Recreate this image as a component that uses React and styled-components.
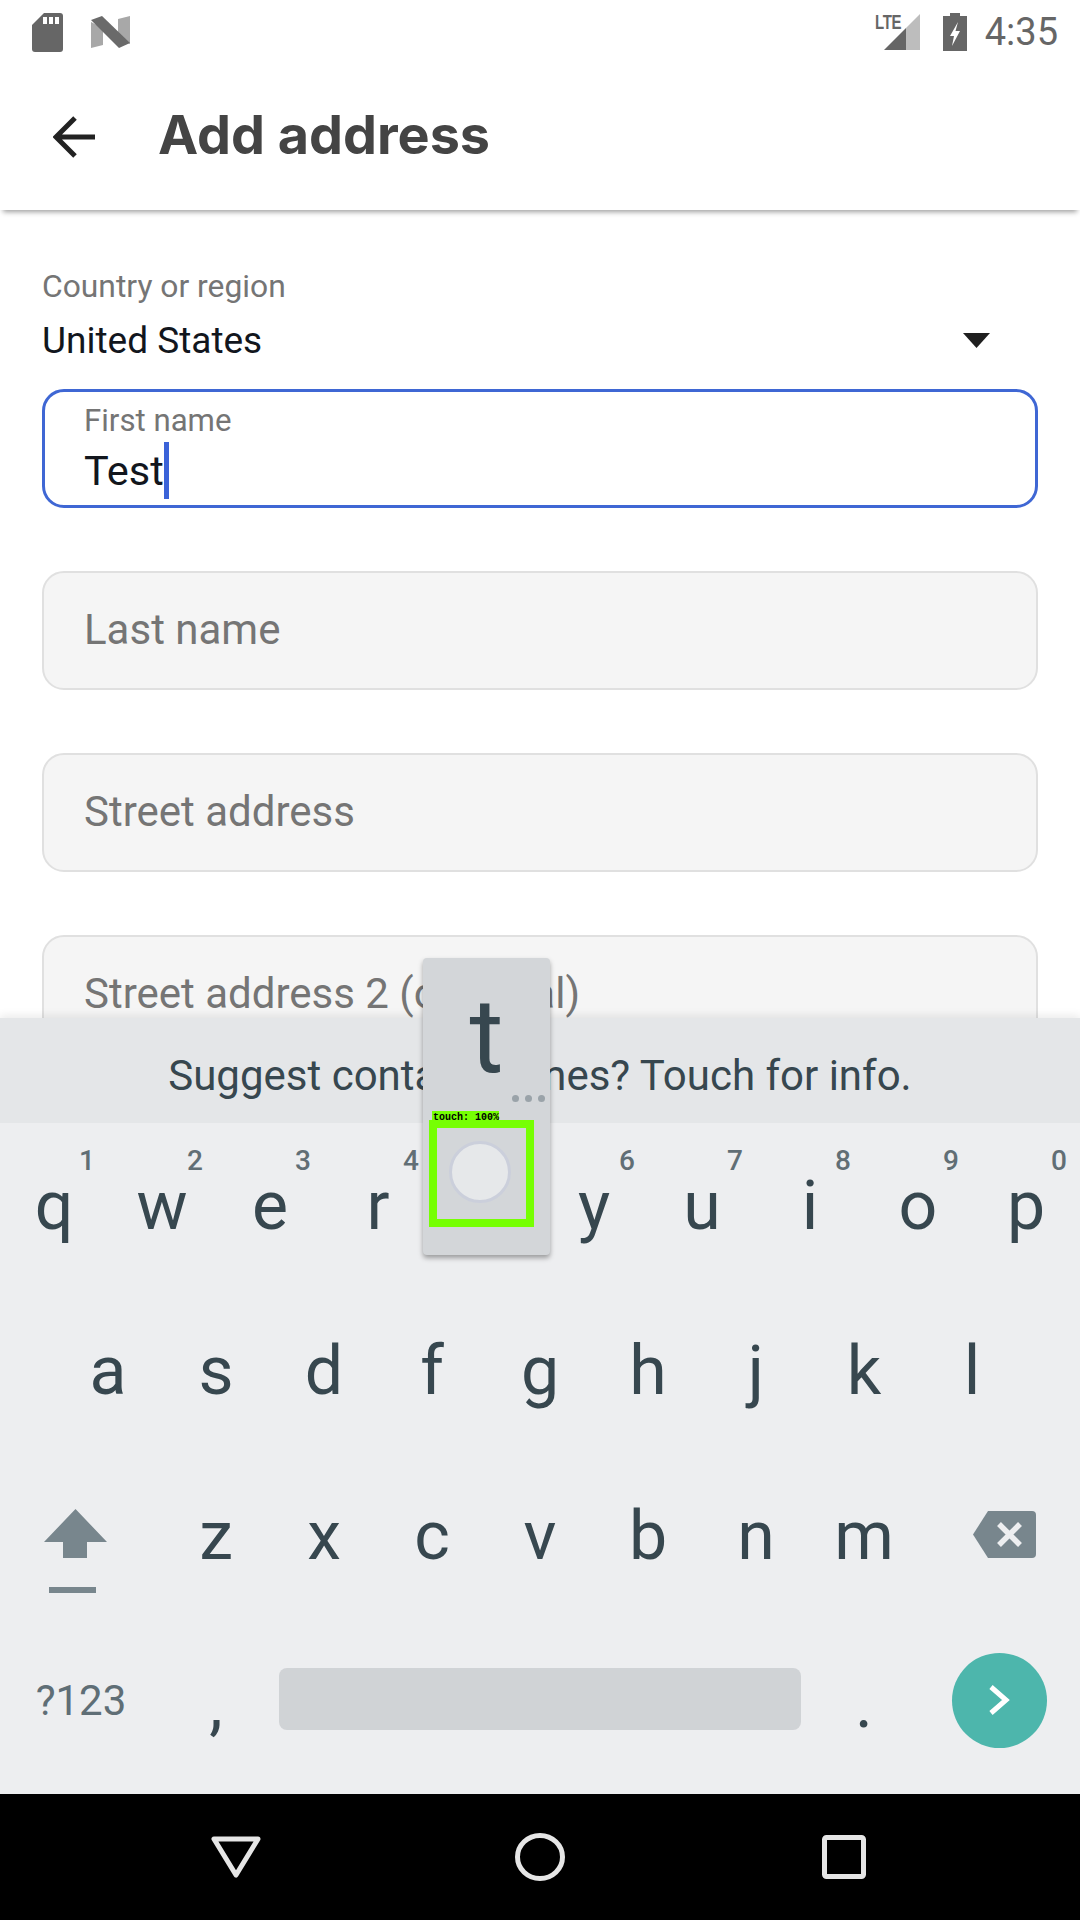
import React from "react";
import styled, { createGlobalStyle } from "styled-components";

const Global = createGlobalStyle`
  html, body { margin: 0; padding: 0; background: #fff; }
  * { box-sizing: border-box; }
  #root { width: 1080px; height: 1920px; }
`;

const Screen = styled.div`
  position: relative;
  width: 1080px;
  height: 1920px;
  display: flex;
  flex-direction: column;
  overflow: hidden;
  font-family: Roboto, "Noto Sans", sans-serif;
  background: #fff;
`;

const StatusBar = styled.div`
  height: 64px;
  flex: none;
  display: flex;
  align-items: center;
  justify-content: space-between;
  padding: 0 22px 0 32px;
  background: #fff;
`;
const StatusGroup = styled.div`
  display: flex;
  align-items: center;
  gap: ${(p) => p.$gap}px;
`;
const Clock = styled.span`
  font-size: 38px;
  color: #666;
  line-height: 1;
  margin-left: -3px;
`;
const LteBox = styled.div`
  position: relative;
  width: 45px;
  height: 38px;
  margin-right: 2px;
`;
const LteText = styled.span`
  position: absolute;
  left: 0;
  top: -1px;
  font: bold 20px/1 "Liberation Sans", sans-serif;
  color: #666;
  transform: scaleX(0.75);
  transform-origin: left center;
  letter-spacing: -0.5px;
`;

const Toolbar = styled.header`
  position: relative;
  z-index: 2;
  height: 146px;
  flex: none;
  display: flex;
  align-items: center;
  padding-left: 53px;
  background: #fff;
  box-shadow: 0 5px 5px -3px rgba(0, 0, 0, 0.38);
`;
const Title = styled.h1`
  margin: -4px 0 0 63px;
  font: 700 53.900px/1 Inter, "Liberation Sans", Arial, sans-serif;
  color: #444;
`;

const Form = styled.main`
  flex: 1;
  min-height: 0;
  overflow: hidden;
  padding: 58px 42px 0 42px;
  background: #fff;
`;
const CountryLabel = styled.div`
  font-size: 31.800px;
  line-height: 36px;
  color: #757575;
`;
const CountryRow = styled.div`
  display: flex;
  align-items: center;
  justify-content: space-between;
  height: 54px;
  margin: 9px 0 22px;
  padding-right: 48px;
  font-size: 37px;
  color: #12161d;
`;
const Fields = styled.div`
  display: flex;
  flex-direction: column;
  gap: 63px;
`;
const Field = styled.div`
  flex: none;
  height: 119px;
  border-radius: 22px;
  padding: ${(p) => (p.$active ? "0 39px" : "0 40px 3px")};
  display: flex;
  flex-direction: column;
  justify-content: center;
  border: ${(p) => (p.$active ? "3px solid #3f67d4" : "2px solid #e0e0e0")};
  background: ${(p) => (p.$active ? "#fff" : "#f5f5f5")};
`;
const FieldLabel = styled.div`
  font-size: 31.200px;
  line-height: 34px;
  color: #757575;
  margin-top: 5px;
`;
const FieldValue = styled.div`
  display: flex;
  align-items: center;
  height: 56px;
  margin-top: 4px;
  font-size: 41.500px;
  color: #12161d;
`;
const Caret = styled.span`
  width: 5px;
  height: 57px;
  background: #3b63d8;
`;
const Placeholder = styled.div`
  font-size: 42px;
  color: #757575;
`;

const Keyboard = styled.section`
  position: relative;
  z-index: 3;
  flex: none;
  height: 776px;
  background: #edeef0;
  box-shadow: 0 -3px 8px rgba(0, 0, 0, 0.08);
`;
const Suggest = styled.div`
  height: 105px;
  padding-top: 9px;
  display: flex;
  align-items: center;
  justify-content: center;
  background: #e4e6e8;
  font-size: 42px;
  color: #37474f;
`;
const Row = styled.div`
  height: ${(p) => p.$h || 165}px;
  display: grid;
  grid-template-columns: ${(p) => p.$cols};
  padding: 0 ${(p) => p.$pad || 0}px;
`;
const Key = styled.div`
  position: relative;
  display: flex;
  align-items: center;
  justify-content: center;
  font-size: 68px;
  line-height: 1;
  color: #37474f;
`;
const Hint = styled.span`
  position: absolute;
  top: 23px;
  right: 13px;
  font-size: 28px;
  line-height: 30px;
  font-weight: 500;
  color: #616e75;
`;
const ShiftKey = styled(Key)`
  padding: 32px 12px 0 0;
`;
const DeleteKey = styled(Key)`
  padding: 0 0 2px 11px;
`;
const ModeKey = styled(Key)`
  font-size: 42px;
  color: #5f6e76;
  padding-bottom: 5px;
`;
const SpaceBar = styled.div`
  align-self: start;
  margin: 50px 9px 0;
  height: 62px;
  border-radius: 8px;
  background: #d0d3d6;
`;
const EnterKey = styled(Key)`
  padding-bottom: 7px;
`;
const EnterCircle = styled.div`
  width: 95px;
  height: 95px;
  border-radius: 50%;
  display: flex;
  align-items: center;
  justify-content: center;
  background: #4db6ac;
`;

const Popup = styled.div`
  position: absolute;
  left: 423px;
  top: -60px;
  width: 127px;
  height: 297px;
  border-radius: 4px;
  background: #d3d6d9;
  box-shadow: 0 3px 5px rgba(0, 0, 0, 0.35);
`;
const PopupLetter = styled.div`
  position: absolute;
  left: 0;
  right: 0;
  top: 18px;
  text-align: center;
  font-size: 104px;
  line-height: 1.17;
  color: #37474f;
`;
const Dots = styled.div`
  position: absolute;
  left: 89px;
  top: 137px;
  display: flex;
  gap: 6px;
`;
const Dot = styled.span`
  width: 7px;
  height: 7px;
  border-radius: 50%;
  background: #9aa3a9;
`;
const TouchLabel = styled.div`
  position: absolute;
  z-index: 1;
  left: 9px;
  top: 153px;
  width: 67px;
  height: 10px;
  background: #76ff03;
  font: bold 10px/14px "Liberation Mono", monospace;
  color: #000;
  white-space: nowrap;
  padding-left: 1px;
`;
const TouchBox = styled.div`
  position: absolute;
  left: 6px;
  top: 162px;
  width: 105px;
  height: 107px;
  border: 8px solid #76ff03;
  display: flex;
  align-items: center;
  justify-content: center;
`;
const TouchCircle = styled.div`
  width: 62px;
  height: 62px;
  border-radius: 50%;
  margin: -4px 0 0 -3px;
  background: #e6e8ea;
  border: 3px solid #cbcfdb;
`;

const NavBar = styled.nav`
  position: relative;
  z-index: 3;
  flex: none;
  height: 126px;
  padding: 0 84px;
  background: #000;
  display: grid;
  grid-template-columns: repeat(3, 304px);
  align-items: center;
  justify-items: center;
`;

const row1 = ["q","w","e","r","t","y","u","i","o","p"];
const row2 = ["a","s","d","f","g","h","j","k","l"];
const row3 = ["z","x","c","v","b","n","m"];

const SdIcon = () => (
  <svg width="31" height="39" viewBox="0 0 31 39">
    <path fill="#666" d="M12 0h16a3 3 0 0 1 3 3v33a3 3 0 0 1-3 3H3a3 3 0 0 1-3-3V12z" />
    <path fill="#fff" d="M11 4h4v7h-4zM17 4h4v7h-4zM23 4h4v7h-4z" />
  </svg>
);
const NIcon = () => (
  <svg width="39" height="33" viewBox="0 0 39 33">
    <path fill="#a8a8a8" d="M0 6l12 6v17L0 32zM27 3l12-3v28l-12-6z" />
    <path fill="#6a6a6a" d="M0 4L11 0 39 27l-11 5z" />
  </svg>
);
const SignalIcon = () => (
  <svg width="36" height="37" viewBox="0 0 36 37" style={{ position: "absolute", left: 9, top: 1 }}>
    <path fill="#bdbdbd" d="M36 0v36H22V14z" />
    <path fill="#666" d="M0 36L22 14v22z" />
  </svg>
);
const BatteryIcon = () => (
  <svg width="24" height="38" viewBox="0 0 24 38">
    <path fill="#666" d="M7 0h10v3h7v35H0V3h7z" />
    <path fill="#fff" d="M15 9l-8 14h4l-2 10 8-15h-4.500z" />
  </svg>
);
const BackArrow = () => (
  <svg width="42" height="42" viewBox="0 0 42 42">
    <path fill="none" stroke="#222" strokeWidth="5" d="M42 21H4M22 2L3 21l19 19" />
  </svg>
);
const Caretdown = () => (
  <svg width="27" height="15" viewBox="0 0 27 15">
    <path fill="#1f1f1f" d="M0 0h27L13.500 15z" />
  </svg>
);
const ShiftIcon = () => (
  <svg width="63" height="85" viewBox="0 0 63 85">
    <path fill="#78868d" d="M31.500 0L63 33H43v16H19V33H0z" />
    <path fill="#78868d" d="M5 78h47v6H5z" />
  </svg>
);
const DeleteIcon = () => (
  <svg width="63" height="47" viewBox="0 0 63 47">
    <path fill="#78868d" d="M15 0h44a4 4 0 0 1 4 4v39a4 4 0 0 1-4 4H15L0 23.500z" />
    <path fill="none" stroke="#edeef0" strokeWidth="5.500" d="M26 13l21 21M47 13L26 34" />
  </svg>
);
const EnterIcon = () => (
  <svg width="22" height="32" viewBox="0 0 22 32">
    <path fill="none" stroke="#fff" strokeWidth="5" d="M3 3l15 13L3 29" />
  </svg>
);
const NavTriangle = () => (
  <svg width="50" height="42" viewBox="0 0 50 42">
    <path fill="none" stroke="#e6e6e6" strokeWidth="5" strokeLinejoin="round" d="M3 3h44L25 39z" />
  </svg>
);
const NavCircle = () => (
  <svg width="50" height="48" viewBox="0 0 50 48">
    <ellipse cx="25" cy="24" rx="22.500" ry="21.500" fill="none" stroke="#e6e6e6" strokeWidth="5" />
  </svg>
);
const NavSquare = () => (
  <svg width="44" height="44" viewBox="0 0 44 44">
    <rect x="2.500" y="2.500" width="39" height="39" rx="2" fill="none" stroke="#e6e6e6" strokeWidth="5" />
  </svg>
);

export default function App() {
  return (
    <Screen>
      <Global />
      <StatusBar>
        <StatusGroup $gap={28}>
          <SdIcon />
          <NIcon />
        </StatusGroup>
        <StatusGroup $gap={21}>
          <LteBox>
            <LteText>LTE</LteText>
            <SignalIcon />
          </LteBox>
          <BatteryIcon />
          <Clock>4:35</Clock>
        </StatusGroup>
      </StatusBar>
      <Toolbar>
        <BackArrow />
        <Title>Add address</Title>
      </Toolbar>
      <Form>
        <CountryLabel>Country or region</CountryLabel>
        <CountryRow>
          United States
          <Caretdown />
        </CountryRow>
        <Fields>
          <Field $active>
            <FieldLabel>First name</FieldLabel>
            <FieldValue>Test<Caret /></FieldValue>
          </Field>
          <Field><Placeholder>Last name</Placeholder></Field>
          <Field><Placeholder>Street address</Placeholder></Field>
          <Field><Placeholder>Street address 2 (optional)</Placeholder></Field>
        </Fields>
      </Form>
      <Keyboard>
        <Suggest>Suggest contact names? Touch for info.</Suggest>
        <Row $cols="repeat(10, 108px)">
          {row1.map((k, i) => (
            <Key key={k}>
              {k}
              <Hint>{(i + 1) % 10}</Hint>
            </Key>
          ))}
        </Row>
        <Row $cols="repeat(9, 108px)" $pad={54}>
          {row2.map((k) => <Key key={k}>{k}</Key>)}
        </Row>
        <Row $cols="162px repeat(7, 108px) 162px">
          <ShiftKey><ShiftIcon /></ShiftKey>
          {row3.map((k) => <Key key={k}>{k}</Key>)}
          <DeleteKey><DeleteIcon /></DeleteKey>
        </Row>
        <Row $cols="162px 108px 540px 108px 162px" $h={171}>
          <ModeKey>?123</ModeKey>
          <Key>,</Key>
          <SpaceBar />
          <Key>.</Key>
          <EnterKey><EnterCircle><EnterIcon /></EnterCircle></EnterKey>
        </Row>
        <Popup>
          <PopupLetter>t</PopupLetter>
          <Dots><Dot /><Dot /><Dot /></Dots>
          <TouchLabel>touch: 100%</TouchLabel>
          <TouchBox><TouchCircle /></TouchBox>
        </Popup>
      </Keyboard>
      <NavBar>
        <NavTriangle />
        <NavCircle />
        <NavSquare />
      </NavBar>
    </Screen>
  );
}
